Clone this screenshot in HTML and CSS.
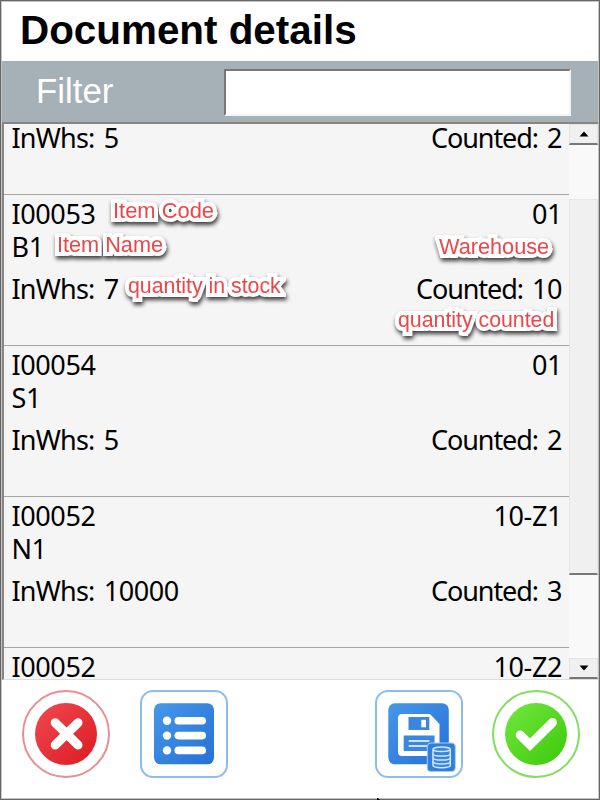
FILE: index.html
```
<!DOCTYPE html>
<html lang="en">
<head>
<meta charset="utf-8">
<title>Document details</title>
<link rel="stylesheet" href="styles.css">
</head>
<body>
<div class="window">
  <header class="title">Document details</header>
  <div class="filter">
    <label class="filter-label" for="filter">Filter</label>
    <input class="filter-input" id="filter" type="text">
  </div>
  <main class="list">
    <div class="rows">
      <section class="row row-clipped">
        <div class="line"></div>
        <div class="line"></div>
        <div class="line stock"><span><span class="key">InWhs:</span> 5</span><span><span class="key">Counted:</span> 2</span></div>
      </section>
      <section class="row">
        <div class="line"><span>I00053</span><span>01</span></div>
        <div class="line"><span>B1</span></div>
        <div class="line stock"><span><span class="key">InWhs:</span> 7</span><span><span class="key">Counted:</span> 10</span></div>
        <span class="note note-code">Item Code</span>
        <span class="note note-name">Item Name</span>
        <span class="note note-stock">quantity in stock</span>
        <span class="note note-whs">Warehouse</span>
        <span class="note note-counted">quantity counted</span>
      </section>
      <section class="row">
        <div class="line"><span>I00054</span><span>01</span></div>
        <div class="line"><span>S1</span></div>
        <div class="line stock"><span><span class="key">InWhs:</span> 5</span><span><span class="key">Counted:</span> 2</span></div>
      </section>
      <section class="row">
        <div class="line"><span>I00052</span><span>10-Z1</span></div>
        <div class="line"><span>N1</span></div>
        <div class="line stock"><span><span class="key">InWhs:</span> 10000</span><span><span class="key">Counted:</span> 3</span></div>
      </section>
      <section class="row">
        <div class="line"><span>I00052</span><span>10-Z2</span></div>
      </section>
    </div>
    <div class="scrollbar">
      <div class="sb-button"><svg width="10" height="6" viewBox="0 0 10 6"><path d="M0.5 5.5 5 0.5 9.5 5.5z"/></svg></div>
      <div class="sb-gap"></div>
      <div class="sb-thumb"></div>
      <div class="sb-track"></div>
      <div class="sb-button"><svg width="10" height="6" viewBox="0 0 10 6"><path d="M0.5 0.5 5 5.5 9.5 0.5z"/></svg></div>
    </div>
  </main>
  <footer class="actions">
    <svg class="action" viewBox="0 0 88 88">
      <defs><linearGradient id="red" x1="0" y1="0" x2="1" y2="1"><stop offset="0" stop-color="#f04a50"/><stop offset="1" stop-color="#dc1a22"/></linearGradient></defs>
      <circle cx="44" cy="44" r="43" fill="#fff" stroke="#e88f92" stroke-width="2"/>
      <circle cx="44" cy="44" r="31" fill="url(#red)"/>
      <path d="M33.2 32.7 56 55M56 32.7 33.2 55" stroke="#fff" stroke-width="9" stroke-linecap="round"/>
    </svg>
    <svg class="action" viewBox="0 0 88 88">
      <defs><linearGradient id="blue" x1="0" y1="0" x2="1" y2="1"><stop offset="0" stop-color="#4598e8"/><stop offset="1" stop-color="#2670d8"/></linearGradient></defs>
      <rect x="1" y="1" width="86" height="86" rx="12" fill="#fff" stroke="#8dbdec" stroke-width="2"/>
      <rect x="14" y="13.3" width="60" height="61" rx="6.5" fill="url(#blue)"/>
      <g fill="#fff"><circle cx="27" cy="30.7" r="4.2"/><circle cx="27" cy="45.6" r="4.2"/><circle cx="27" cy="60.4" r="4.2"/>
      <rect x="34.5" y="27" width="31.5" height="7.6" rx="3.8"/><rect x="34.5" y="41.8" width="31.5" height="7.6" rx="3.8"/><rect x="34.5" y="56.6" width="31.5" height="7.6" rx="3.8"/></g>
    </svg>
    <svg class="action save" viewBox="0 0 88 88">
      <rect x="1" y="1" width="86" height="86" rx="12" fill="#fff" stroke="#8dbdec" stroke-width="2"/>
      <rect x="13.3" y="13.3" width="60.5" height="61" rx="6.5" fill="url(#blue)"/>
      <path d="M27 24H55L64.5 34V62Q64.5 66 60.5 66H27Q23 66 23 62V28Q23 24 27 24z" fill="#fff"/>
      <path d="M33.5 27H54.3V40H33.5zM28.7 45.5H59.5V61H28.7z" fill="#3b86e0"/>
      <path d="M46.3 29.8H51V37.3H46.3z" fill="#fff"/>
      <path d="M33.7 51H54.5M33.7 56H54.5" stroke="#fff" stroke-width="1.5"/>
      <rect x="52.3" y="53" width="28" height="28.5" rx="3.5" fill="#2f7fdb" stroke="#a9cdf3"/>
      <g fill="#3a86dd" stroke="#d5e8fc" stroke-width="1.5"><path d="M58 59.5V75.3C58 78.5 75.3 78.5 75.3 75.3V59.5"/><ellipse cx="66.65" cy="59.3" rx="8.65" ry="2.3"/><path d="M58 63.7C58 66.8 75.3 66.8 75.3 63.7M58 67.7C58 70.8 75.3 70.8 75.3 67.7M58 71.6C58 74.7 75.3 74.7 75.3 71.6" fill="none"/></g>
    </svg>
    <svg class="action" viewBox="0 0 88 88">
      <defs><linearGradient id="green" x1="0" y1="0" x2="1" y2="1"><stop offset="0" stop-color="#72e83c"/><stop offset="1" stop-color="#3cc80c"/></linearGradient></defs>
      <circle cx="44" cy="44" r="43" fill="#fff" stroke="#80de5c" stroke-width="2"/>
      <circle cx="44" cy="44" r="31" fill="url(#green)"/>
      <path d="M28.2 45 38 54.6 60.5 32.5" fill="none" stroke="#fff" stroke-width="9" stroke-linecap="round"/>
    </svg>
  </footer>
  <svg class="pointer" width="3" height="2" viewBox="0 0 3 2"><path d="M0 0H1L3 2H0z"/></svg>
</div>
</body>
</html>
```
FILE: styles.css
```
* { box-sizing: border-box; }
body { margin: 0; background: #fff; }
.window {
  position: relative;
  width: 600px; height: 800px;
  display: flex; flex-direction: column;
  border: 1px solid #666;
  box-shadow: inset 0 0 0 1px #c4c4c4;
  padding: 0 1px 1px;
  font-family: "Liberation Sans", Arial, sans-serif;
}
.title {
  height: 60px; flex: none;
  padding: 0 0 0 18px;
  line-height: 59px; font-size: 40.4px; font-weight: bold; color: #000;
}
.filter {
  height: 61px; flex: none;
  display: flex; align-items: center;
  padding: 0 27px 0 34px;
  background: #a6b0b7;
}
.filter-label { width: 188px; font-size: 34.8px; line-height: 40px; color: #fff; padding-bottom: 1px; }
.filter-input {
  width: 347px; height: 47px; margin-top: 2px; padding: 0 6px;
  border: 2px solid; border-color: #777 #f4f4f4 #f4f4f4 #777;
  background: #fff; font: 30px "Liberation Sans", Arial, sans-serif; outline: 0;
}
.list {
  height: 558px; flex: none;
  display: flex; overflow: hidden;
  border-style: solid; border-width: 2px 0 1px 2px; border-color: #888583 #888 #ddd #888583;
  background: #f5f5f5;
}
.rows { flex: 1; overflow: hidden; font-family: "Noto Sans", Tahoma, sans-serif; font-size: 27px; letter-spacing: -0.4px; color: #000; }
.row { position: relative; height: 151.1px; padding: 2px 7px 0 7.5px; border-bottom: 1px solid #a6a6a6; }
.row-clipped { margin-top: -80px; }
.line { display: flex; justify-content: space-between; height: 33px; line-height: 34px; white-space: nowrap; }
.stock { margin-top: 9px; word-spacing: 2.5px; }
.key { letter-spacing: -0.8px; }
.stock > :last-child .key { letter-spacing: -1.1px; }
.note {
  position: absolute;
  font: 21.3px/24px "Liberation Sans", Arial, sans-serif; letter-spacing: 0; word-spacing: 0;
  color: #ec4648; white-space: nowrap;
  -webkit-text-stroke: 8px #fff; paint-order: stroke fill; stroke-linejoin: round;
  filter: drop-shadow(1px 3px 2px rgba(0, 0, 0, .75));
}
.note-code { left: 109px; top: 4px; font-size: 21.9px; }
.note-name { left: 53px; top: 38px; font-size: 21.7px; }
.note-stock { left: 124px; top: 79px; }
.note-whs { left: 435px; top: 40px; font-size: 21.7px; }
.note-counted { left: 394px; top: 113px; }
.scrollbar { width: 29px; display: flex; flex-direction: column; background: #f9f9f9; }
.sb-button {
  height: 21px; flex: none; display: flex; align-items: center; justify-content: center;
  background: #f0f0f0; border: 1px solid #e3e3e3; border-bottom: 2px solid #777;
}
.sb-gap { height: 54px; flex: none; }
.sb-thumb { height: 376px; flex: none; background: #f0f0f0; border: 1px solid #e6e6e6; border-bottom: 2px solid #777; }
.sb-track { flex: 1; }
.actions { flex: 1; display: flex; align-items: flex-start; gap: 29px; padding: 10px 18px 0 20px; }
.action { width: 88px; height: 88px; flex: none; }
.action:nth-child(2) { margin-left: 1px; }
.save { margin-left: auto; }
.pointer { position: absolute; left: 376px; bottom: -1px; }
```
